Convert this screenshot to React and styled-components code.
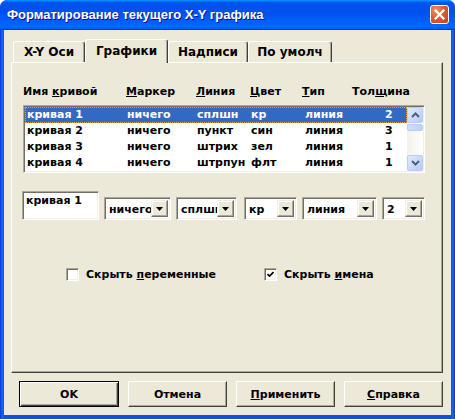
import styled, { createGlobalStyle } from "styled-components";

const GlobalStyle = createGlobalStyle`
  html, body {
    margin: 0;
    padding: 0;
    background: #ffffff;
    overflow: hidden;
  }
  * {
    box-sizing: border-box;
  }
`;

const FONT = `"DejaVu Sans", "Liberation Sans", sans-serif`;

const tabs = [
  { label: "X-Y Оси", width: 72 },
  { label: "Графики", width: 83, active: true },
  { label: "Надписи", width: 80 },
  { label: "По умолч", width: 84 },
];

const curves = [
  ["кривая 1", "ничего", "сплшн", "кр", "линия", "2"],
  ["кривая 2", "ничего", "пункт", "син", "линия", "3"],
  ["кривая 3", "ничего", "штрих", "зел", "линия", "1"],
  ["кривая 4", "ничего", "штрпун", "флт", "линия", "1"],
];

const combos = [
  { value: "ничего", width: 67, gap: 5 },
  { value: "сплшн", width: 61, gap: 5 },
  { value: "кр", width: 53, gap: 7 },
  { value: "линия", width: 75, gap: 5 },
  { value: "2", width: 43, gap: 5 },
];

// underline one letter, like a windows mnemonic
const Mn = ({ text, at }) => (
  <>
    {text.slice(0, at)}
    <u>{text[at]}</u>
    {text.slice(at + 1)}
  </>
);

export default function App() {
  return (
    <>
      <GlobalStyle />
      <Window>
        <TitleBar>
          <Title>Форматирование текущего X-Y графика</Title>
          <CloseButton>
            <svg width="11" height="11" viewBox="0 0 11 11">
              <path
                d="M1.5 1.5 L9.5 9.5 M9.5 1.5 L1.5 9.5"
                stroke="#fff"
                strokeWidth="2.2"
                strokeLinecap="square"
              />
            </svg>
          </CloseButton>
        </TitleBar>

        <Body>
          <TabStrip>
            {tabs.map((t) => (
              <Tab key={t.label} $w={t.width} $active={t.active}>
                {t.label}
              </Tab>
            ))}
          </TabStrip>

          <Panel>
            <HeaderRow>
              <span>
                Имя <Mn text="кривой" at={0} />
              </span>
              <span>
                <Mn text="Маркер" at={0} />
              </span>
              <span>
                <Mn text="Линия" at={0} />
              </span>
              <span>
                <Mn text="Цвет" at={0} />
              </span>
              <span>
                <Mn text="Тип" at={0} />
              </span>
              <span>
                <Mn text="Толщина" at={3} />
              </span>
            </HeaderRow>

            <ListBox>
              <Rows>
                {curves.map((row, i) => (
                  <Row key={row[0]} $selected={i === 0}>
                    {row.map((cell, j) => (
                      <Cell key={j}>{cell}</Cell>
                    ))}
                  </Row>
                ))}
              </Rows>
              <ScrollBar>
                <ScrollButton>
                  <svg width="9" height="6" viewBox="0 0 9 6">
                    <path d="M1 5 L4.5 1.5 L8 5" fill="none" stroke="#4D6185" strokeWidth="2" />
                  </svg>
                </ScrollButton>
                <Thumb />
                <Track />
                <ScrollButton>
                  <svg width="9" height="6" viewBox="0 0 9 6">
                    <path d="M1 1 L4.5 4.5 L8 1" fill="none" stroke="#4D6185" strokeWidth="2" />
                  </svg>
                </ScrollButton>
              </ScrollBar>
            </ListBox>

            <EditRow>
              <TextBox>кривая 1</TextBox>
              {combos.map((c) => (
                <Combo key={c.value} $w={c.width} $gap={c.gap}>
                  <ComboValue>{c.value}</ComboValue>
                  <ComboArrow>
                    <svg width="7" height="4" viewBox="0 0 7 4">
                      <path d="M0 0 H7 L3.5 4 Z" fill="#000" />
                    </svg>
                  </ComboArrow>
                </Combo>
              ))}
            </EditRow>

            <CheckRow>
              <CheckItem $w={198}>
                <CheckBox />
                <span>
                  Скрыть <Mn text="переменные" at={0} />
                </span>
              </CheckItem>
              <CheckItem>
                <CheckBox>
                  <svg width="7" height="7" viewBox="0 0 7 7">
                    <path d="M0.5 3 L2.5 5 L6.5 1" fill="none" stroke="#000" strokeWidth="1.6" />
                  </svg>
                </CheckBox>
                <span>
                  Скрыть <Mn text="имена" at={0} />
                </span>
              </CheckItem>
            </CheckRow>
          </Panel>

          <ButtonRow>
            <Button $default>OK</Button>
            <Button>Отмена</Button>
            <Button>
              <Mn text="Применить" at={0} />
            </Button>
            <Button>
              <Mn text="Справка" at={0} />
            </Button>
          </ButtonRow>
        </Body>
      </Window>
    </>
  );
}

const Window = styled.div`
  width: 455px;
  height: 419px;
  display: flex;
  flex-direction: column;
  border-radius: 7px 7px 0 0;
  background: linear-gradient(to right, #0831d9 0, #166aee 2px, #0855dd 4px, #0855dd 451px, #166aee 453px, #0831d9 455px);
  overflow: hidden;
`;

const TitleBar = styled.div`
  height: 30px;
  flex: none;
  display: flex;
  align-items: center;
  justify-content: space-between;
  padding: 0 6px 0 7px;
  border-radius: 7px 7px 0 0;
  background: linear-gradient(
    to bottom,
    #0997ff 0%,
    #0053ee 9%,
    #0050ee 40%,
    #0066ff 86%,
    #0066ff 92%,
    #005bff 95%,
    #003dd7 97%,
    #003dd7 100%
  );
`;

const Title = styled.div`
  font-family: "Liberation Sans", Arial, sans-serif;
  font-weight: bold;
  font-size: 13px;
  color: #ffffff;
  text-shadow: 1px 1px 0 #0f1089;
  white-space: nowrap;
  margin-top: -1px;
`;

const CloseButton = styled.div`
  width: 19px;
  height: 19px;
  margin-top: -2px;
  border: 1px solid #ffffff;
  border-radius: 3px;
  background: radial-gradient(circle at 30% 25%, #f0906c 0%, #e25a32 45%, #c63d18 100%);
  display: flex;
  align-items: center;
  justify-content: center;
`;

const Body = styled.div`
  flex: 1;
  margin: 0 4px 4px;
  background: #ece9d8;
  padding: 9px 8px 8px 7px;
  display: flex;
  flex-direction: column;
  font-family: ${FONT};
  font-weight: bold;
  font-size: 11px;
  color: #000;
`;

const TabStrip = styled.div`
  height: 23px;
  flex: none;
  display: flex;
  align-items: flex-end;
  padding-left: 2px;
  position: relative;
  z-index: 1;
`;

const Tab = styled.div`
  width: ${(p) => p.$w}px;
  height: ${(p) => (p.$active ? 24 : 21)}px;
  margin-bottom: ${(p) => (p.$active ? -1 : 0)}px;
  background: #ece9d8;
  border-top: 1px solid #ffffff;
  border-left: 1px solid #ffffff;
  border-right: 1px solid #404040;
  box-shadow: inset -1px 0 0 #aca899;
  border-radius: 3px 3px 0 0;
  display: flex;
  align-items: center;
  justify-content: center;
  padding-bottom: ${(p) => (p.$active ? 2 : 0)}px;
  font-size: 12px;
  white-space: nowrap;
`;

const Panel = styled.div`
  flex: 1;
  border-top: 1px solid #ffffff;
  border-left: 1px solid #ffffff;
  border-right: 1px solid #404040;
  border-bottom: 1px solid #404040;
  box-shadow: inset -1px -1px 0 #aca899;
  padding: 21px 17px 0 11px;
  display: flex;
  flex-direction: column;
`;

const HeaderRow = styled.div`
  display: grid;
  grid-template-columns: 103px 70px 54px 52px 50px 1fr;
  height: 16px;
  line-height: 16px;
  white-space: nowrap;
  margin-bottom: 5px;
`;

const ListBox = styled.div`
  height: 68px;
  display: flex;
  background: #ffffff;
  border-top: 1px solid #aca899;
  border-left: 1px solid #aca899;
  border-right: 1px solid #ffffff;
  border-bottom: 1px solid #ffffff;
  box-shadow: inset 1px 1px 0 #716f64, inset -1px -1px 0 #f1efe2;
  padding: 1px;
`;

const Rows = styled.div`
  flex: 1;
  overflow: hidden;
`;

const Row = styled.div`
  display: grid;
  grid-template-columns: 100px 70px 54px 54px 80px 1fr;
  height: 16px;
  line-height: 14px;
  padding-left: 1px;
  white-space: nowrap;
  background: ${(p) => (p.$selected ? "#316ac5" : "transparent")};
  color: ${(p) => (p.$selected ? "#ffffff" : "#000000")};
  border: 1px dotted ${(p) => (p.$selected ? "#d9a441" : "transparent")};
`;

const Cell = styled.span`
  overflow: hidden;
`;

const ScrollBar = styled.div`
  width: 16px;
  display: flex;
  flex-direction: column;
  background: linear-gradient(to right, #f3f1ec, #fefefb);
`;

const ScrollButton = styled.div`
  height: 16px;
  flex: none;
  display: flex;
  align-items: center;
  justify-content: center;
  border: 1px solid #b8ccf5;
  border-radius: 2px;
  background: linear-gradient(135deg, #e1eafe 0%, #c8d8fb 60%, #b4c8f6 100%);
`;

const Thumb = styled.div`
  height: 7px;
  margin-top: 1px;
  flex: none;
  border: 1px solid #b8ccf5;
  border-radius: 2px;
  background: linear-gradient(to right, #cfdcfc, #bfd1fa);
`;

const Track = styled.div`
  flex: 1;
`;

const EditRow = styled.div`
  display: flex;
  align-items: flex-end;
  margin-top: 18px;
  margin-left: -1px;
`;

const sunken = `
  border-top: 1px solid #aca899;
  border-left: 1px solid #aca899;
  border-right: 1px solid #ffffff;
  border-bottom: 1px solid #ffffff;
  box-shadow: inset 1px 1px 0 #716f64, inset -1px -1px 0 #f1efe2;
  background: #ffffff;
`;

const TextBox = styled.div`
  ${sunken}
  width: 77px;
  height: 29px;
  padding: 2px 3px;
  line-height: 14px;
  white-space: nowrap;
`;

const Combo = styled.div`
  ${sunken}
  width: ${(p) => p.$w}px;
  height: 23px;
  margin-left: ${(p) => p.$gap}px;
  padding: 2px;
  display: flex;
  align-items: stretch;
`;

const ComboValue = styled.div`
  flex: 1;
  min-width: 0;
  overflow: hidden;
  white-space: nowrap;
  line-height: 19px;
  padding-left: 2px;
`;

const ComboArrow = styled.div`
  width: 17px;
  flex: none;
  background: #ece9d8;
  border-top: 1px solid #f1efe2;
  border-left: 1px solid #f1efe2;
  border-right: 1px solid #716f64;
  border-bottom: 1px solid #716f64;
  box-shadow: inset -1px -1px 0 #aca899, inset 1px 1px 0 #ffffff;
  display: flex;
  align-items: center;
  justify-content: center;
`;

const CheckRow = styled.div`
  display: flex;
  margin-top: 48px;
  padding-left: 43px;
`;

const CheckItem = styled.label`
  display: flex;
  align-items: center;
  gap: 7px;
  width: ${(p) => (p.$w ? `${p.$w}px` : "auto")};
  white-space: nowrap;
`;

const CheckBox = styled.span`
  ${sunken}
  width: 13px;
  height: 13px;
  flex: none;
  display: flex;
  align-items: center;
  justify-content: center;
`;

const ButtonRow = styled.div`
  display: flex;
  justify-content: flex-end;
  gap: 9px;
  margin-top: 8px;
  height: 26px;
  flex: none;
`;

const Button = styled.div`
  width: ${(p) => (p.$default ? 100 : 99)}px;
  height: 26px;
  background: #ece9d8;
  display: flex;
  align-items: center;
  justify-content: center;
  border: 1px solid ${(p) => (p.$default ? "#000" : "transparent")};
  box-shadow: inset 1px 1px 0 #ffffff, inset -1px -1px 0 #404040, inset -2px -2px 0 #aca899;
  ${(p) =>
    !p.$default &&
    `
    border-top: 1px solid #ffffff;
    border-left: 1px solid #ffffff;
    border-right: 1px solid #404040;
    border-bottom: 1px solid #404040;
    box-shadow: inset -1px -1px 0 #aca899;
  `}
`;
